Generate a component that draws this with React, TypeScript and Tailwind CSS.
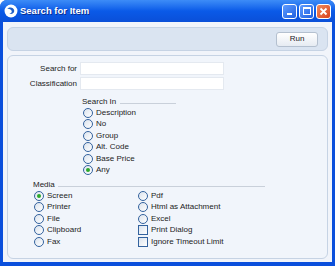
import React from 'react';

const font = { fontFamily: '"Liberation Sans", Arial, sans-serif' };

// XP-style radio button
const Radio = ({ checked = false }: { checked?: boolean }) => (
  <span className="w-[10px] h-[10px] rounded-full border border-[#33629e] bg-gradient-to-br from-[#dbe3ed] to-white flex items-center justify-center shrink-0">
    {checked && <span className="w-[4px] h-[4px] rounded-full bg-[#2ba82b]" />}
  </span>
);

const Check = () => (
  <span className="w-[10px] h-[10px] border border-[#33629e] bg-gradient-to-br from-[#dbe3ed] to-white shrink-0" />
);

interface OptProps {
  label: string;
  checked?: boolean;
  box?: boolean;
}

const Option = ({ label, checked, box }: OptProps) => (
  <div className="h-[11.5px] flex items-center gap-[3px] text-[8px] text-[#1c1c1c] leading-none">
    {box ? <Check /> : <Radio checked={checked} />}
    <span>{label}</span>
  </div>
);

const searchIn = ['Description', 'No', 'Group', 'Alt. Code', 'Base Price', 'Any'];
const mediaLeft = ['Screen', 'Printer', 'File', 'Clipboard', 'Fax'];

export default function App() {
  return (
    <div className="w-[335px] h-[266px] flex flex-col bg-[#0a4fdc] rounded-t-[7px] overflow-hidden text-[#1c1c1c]" style={font}>
      {/* Title bar */}
      <div className="h-[22px] shrink-0 flex items-center pl-[4px] pr-[4px] bg-gradient-to-b from-[#3d8cf7] via-[#0a5ae8] to-[#0a4fd8]">
        <svg width="14" height="14" viewBox="0 0 13 13" className="shrink-0">
          <circle cx="6.5" cy="6.5" r="6" fill="#ffffff" />
          <path d="M3 4.5 C5 2.5 9 3 9.5 6 C9.8 8.5 7 10 5 9 C7 8.5 8 7 6.5 5.5 C5.5 4.6 4 4.6 3 4.5 Z" fill="#1f5fc8" />
        </svg>
        <span className="ml-[2px] text-white font-bold text-[9.5px] [text-shadow:1px_1px_0_#0a2f90]">Search for Item</span>
        <div className="ml-auto flex gap-[2px]">
          <div className="w-[15px] h-[15px] rounded-[3px] border border-white bg-gradient-to-br from-[#5f9cff] to-[#1f5fe0] flex items-end justify-center pb-[3px]">
            <span className="w-[5px] h-[2px] bg-white" />
          </div>
          <div className="w-[15px] h-[15px] rounded-[3px] border border-white bg-gradient-to-br from-[#5f9cff] to-[#1f5fe0] flex items-center justify-center">
            <span className="w-[8px] h-[8px] border border-white border-t-2" />
          </div>
          <div className="w-[15px] h-[15px] rounded-[3px] border border-white bg-gradient-to-br from-[#f08a5c] to-[#d8401a] flex items-center justify-center">
            <svg width="9" height="9" viewBox="0 0 9 9">
              <path d="M1.5 1.5 L7.5 7.5 M7.5 1.5 L1.5 7.5" stroke="#fff" strokeWidth="1.8" />
            </svg>
          </div>
        </div>
      </div>

      {/* Window body */}
      <div className="flex-1 mx-[3px] mb-[4px] bg-[#f1f4fa] flex flex-col px-[4px] pt-[5px] pb-[3px] gap-[4px]">
        {/* Button bar */}
        <div className="h-[24px] shrink-0 rounded-[6px] border border-[#c6d3e4] bg-[#dae4f1] flex items-center justify-end pr-[9px]">
          <button className="w-[42px] h-[15px] rounded-[3px] border border-[#b4c0cf] bg-gradient-to-b from-white to-[#e6ebf2] text-[8px] text-[#1c1c1c] leading-none">
            Run
          </button>
        </div>

        {/* Main panel */}
        <div className="flex-1 rounded-[6px] border border-[#c6d3e4] bg-[#f1f5fb] flex flex-col pt-[6px]">
          <div className="flex flex-col gap-[2px]">
            <div className="flex items-center h-[13px]">
              <span className="w-[69px] text-right text-[8px] leading-none">Search for</span>
              <span className="ml-[3px] w-[144px] h-[13px] bg-white border border-[#e4e9f0]" />
            </div>
            <div className="flex items-center h-[13px]">
              <span className="w-[69px] text-right text-[8px] leading-none">Classification</span>
              <span className="ml-[3px] w-[144px] h-[13px] bg-white border border-[#e4e9f0]" />
            </div>
          </div>

          <div className="ml-[74px] mt-[6px] flex flex-col">
            <div className="h-[11px] flex items-center text-[8px] leading-none">
              <span>Search In</span>
              <span className="ml-[4px] w-[56px] h-px bg-[#c9d0da] mt-[3px]" />
            </div>
            <div className="ml-[1px] flex flex-col">
              {searchIn.map(s => (
                <Option key={s} label={s} checked={s === 'Any'} />
              ))}
            </div>
          </div>

          <div className="ml-[25px] mt-[3px] flex flex-col">
            <div className="h-[11px] flex items-center text-[8px] leading-none">
              <span>Media</span>
              <span className="ml-[3px] w-[207px] h-px bg-[#c9d0da] mt-[4px]" />
            </div>
            <div className="ml-[1px] flex">
              <div className="w-[104px] flex flex-col">
                {mediaLeft.map(s => (
                  <Option key={s} label={s} checked={s === 'Screen'} />
                ))}
              </div>
              <div className="flex flex-col">
                <Option label="Pdf" />
                <Option label="Html as Attachment" />
                <Option label="Excel" />
                <Option label="Print Dialog" box />
                <Option label="Ignore Timeout Limit" box />
              </div>
            </div>
          </div>
        </div>
      </div>
    </div>
  );
}
